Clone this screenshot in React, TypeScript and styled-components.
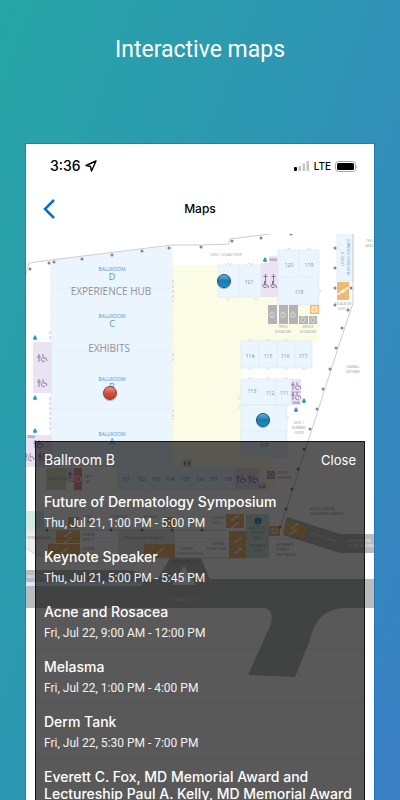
import React, { useState } from "react";
import styled, { createGlobalStyle } from "styled-components";

const GlobalStyle = createGlobalStyle`
  *, *::before, *::after { box-sizing: border-box; }
  body { margin: 0; font-family: Inter, "Liberation Sans", sans-serif; }
  button { font: inherit; }
`;

const Page = styled.main`
  display: flex;
  flex-direction: column;
  height: 100vh;
  overflow: hidden;
  background: linear-gradient(110deg, #27a6a5 0%, #2e95b4 50%, #3a7ec4 100%);
`;

const Headline = styled.h1`
  margin: 0;
  padding: 35px 16px 79px;
  color: #fff;
  font: 400 23px/30px Roboto, sans-serif;
  text-align: center;
`;

const Phone = styled.section`
  display: flex;
  flex: 1;
  flex-direction: column;
  min-height: 0;
  margin: 0 26px;
  background: #fff;
  box-shadow: 0 0 0 1px rgba(0, 112, 176, 0.5);
`;

const StatusBar = styled.div`
  display: flex;
  align-items: center;
  justify-content: space-between;
  height: 44px;
  padding: 0 16px 0 24px;
  color: #000;
`;

const StatusGroup = styled.div`
  display: flex;
  align-items: center;
  gap: 4px;
`;

const Clock = styled.span`
  font-size: 14px;
  font-weight: 500;
  line-height: 20px;
`;

const Network = styled.span`
  font-size: 10px;
  font-weight: 500;
  line-height: 16px;
`;

const NavBar = styled.header`
  display: grid;
  grid-template-columns: 48px 1fr 48px;
  align-items: center;
  height: 42px;
  margin-bottom: 4px;
`;

const BackButton = styled.button`
  display: flex;
  align-items: center;
  height: 42px;
  padding: 0 0 0 16px;
  border: 0;
  background: none;
  cursor: pointer;
`;

const NavTitle = styled.h2`
  margin: 0;
  font-size: 12px;
  font-weight: 500;
  line-height: 16px;
  text-align: center;
`;

const MapArea = styled.div`
  position: relative;
  flex: 1;
  min-height: 0;
  overflow: hidden;
`;

const FloorPlan = styled.svg`
  display: block;
  width: 100%;
  height: auto;
  font-family: "Open Sans", "Noto Sans", sans-serif;
`;

const Pin = styled.button<{ $x: number; $y: number; $tone: "red" | "blue" }>`
  position: absolute;
  left: ${(p) => p.$x}%;
  top: ${(p) => p.$y}px;
  width: 14px;
  height: 14px;
  margin: -7px 0 0 -7px;
  padding: 0;
  border: 1px solid ${(p) => (p.$tone === "red" ? "#7c3a34" : "#1d4c6c")};
  border-radius: 50%;
  background: ${(p) =>
    p.$tone === "red"
      ? "linear-gradient(#ee9384, #d9513f 50%, #b5402f)"
      : "linear-gradient(#62b4dc, #1779b2 50%, #1e8fc8)"};
  box-shadow: 0 1px 1px rgba(0, 0, 0, 0.3);
  cursor: pointer;
`;

const Sheet = styled.section`
  position: absolute;
  top: 207px;
  right: 9px;
  bottom: 0;
  left: 9px;
  display: flex;
  flex-direction: column;
  border: 1px solid #141414;
  border-bottom: 0;
  background: rgba(0, 0, 0, 0.65);
  color: #fff;
`;

const SheetHeader = styled.div`
  display: flex;
  align-items: center;
  justify-content: space-between;
  height: 36px;
  margin-bottom: 6px;
  padding: 0 8px;
`;

const SheetTitle = styled.h3`
  margin: 0;
  font-size: 14px;
  font-weight: 400;
  line-height: 20px;
`;

const CloseButton = styled.button`
  padding: 0;
  border: 0;
  background: none;
  color: #fff;
  font-size: 13px;
  line-height: 20px;
  cursor: pointer;
`;

const SessionList = styled.ul`
  flex: 1;
  min-height: 0;
  margin: 0;
  padding: 0;
  overflow-y: auto;
  list-style: none;
  scrollbar-width: none;
`;

const Session = styled.li`
  padding: 9px 8px 7px;
  border-bottom: 1px solid rgba(0, 0, 0, 0.05);
`;

const SessionTitle = styled.h4`
  margin: 0 0 5px;
  font-size: 14px;
  font-weight: 500;
  line-height: 17px;
`;

const SessionTime = styled.p`
  margin: 0;
  color: #f2f2f2;
  font-family: Roboto, sans-serif;
  font-size: 12px;
  line-height: 16px;
`;

const sessions = [
  { title: "Future of Dermatology Symposium", time: "Thu, Jul 21, 1:00 PM - 5:00 PM" },
  { title: "Keynote Speaker", time: "Thu, Jul 21, 5:00 PM - 5:45 PM" },
  { title: "Acne and Rosacea", time: "Fri, Jul 22, 9:00 AM - 12:00 PM" },
  { title: "Melasma", time: "Fri, Jul 22, 1:00 PM - 4:00 PM" },
  { title: "Derm Tank", time: "Fri, Jul 22, 5:30 PM - 7:00 PM" },
  { title: "Everett C. Fox, MD Memorial Award and Lectureship Paul A. Kelly, MD Memorial Award", time: "" },
];

const C = {
  room: "#ebf5fe",
  foyer: "#fbfce6",
  pink: "#eae3f1",
  orange: "#efba76",
  grey: "#b3b3b7",
  road: "#bbbcbe",
  line: "#cdcdcf",
  dot: "#85858a",
  blue: "#5a95ca",
  small: "#9a9a9e",
};

type Pt = [number, number];

const posts: Pt[] = [
  [30, 269], [49, 263], [54, 262], [82, 259], [112, 255], [142, 251], [169, 248],
  [201, 247], [232, 241], [261, 238], [291, 234], [335, 248], [335, 268],
  [335, 288], [351, 288], [335, 305], [348, 310], [342, 328], [336, 348],
  [330, 369], [323, 389], [317, 409], [310, 429], [304, 449], [298, 469],
  [292, 489], [286, 509], [280, 527], [47, 530], [111, 530], [142, 530], [172, 530], [202, 530],
];

const drops: Pt[] = [[265, 260], [35, 338], [35, 398], [35, 431], [304, 401], [296, 410]];

const roomNumbers: [string, number, number][] = [
  ["121", 249, 284], ["120", 289, 267], ["119", 309, 267], ["118", 299, 294],
  ["114", 250, 358], ["115", 268, 358], ["116", 285, 358], ["117", 303, 358],
  ["113", 252, 393], ["112", 270, 395], ["111", 284, 395], ["109", 264, 447],
  ["101", 126, 481], ["102", 141, 481], ["103", 156, 481], ["104", 170, 481],
  ["105", 185, 481], ["106", 200, 481], ["107", 213, 481], ["108", 228, 481],
];

const ballrooms: [string, number][] = [["D", 271], ["C", 318], ["B", 381], ["A", 436]];

const notes: [string, number, number][] = [
  ["SEAWALL", 353, 368], ["PATHWAY", 353, 373],
  ["LEVEL 1", 299, 424], ["BURRARD", 299, 429], ["FOYER", 299, 434],
  ["TRIPLE", 283, 328], ["ELEVATORS", 283, 333], ["SERVICE", 308, 328], ["ELEVATORS", 308, 333],
  ["ESCALATOR", 343, 305], ["LEVEL 2", 343, 310],
  ["FIRST", 88, 478], ["AID", 88, 483], ["SERVICE", 283, 474], ["ELEVATOR", 284, 479],
  ["MOBILE", 88, 518], ["STAGE", 88, 523], ["EXHIBITION", 119, 518], ["ATTENDEE", 151, 518],
  ["TO/FROM", 88, 536], ["LEVEL 2", 88, 541], ["TO/FROM", 88, 550], ["LEVEL 3", 88, 555],
  ["OPEN TO BELOW OR HALLS", 143, 539], ["TO/FROM", 186, 550], ["CONVENTION LEVEL", 190, 555],
  ["TO/FROM", 218, 519], ["LEVEL 2", 218, 524], ["TO/FROM", 218, 545], ["EXHIBIT LEVEL", 217, 550],
  ["ACCESS TO", 258, 529], ["BURRARD", 258, 534], ["WEST", 258, 539],
  ["ENTRANCE", 258, 547], ["LOBBY", 258, 552],
];

function Restroom({ x, y }: { x: number; y: number }) {
  return (
    <g fill="none" stroke="#8c72a0" strokeWidth="0.9">
      <circle cx={x - 3} cy={y - 3} r="0.8" fill="#785b8f" stroke="none" />
      <path d={`M${x - 5} ${y - 1}h4M${x - 3} ${y - 2}v6`} />
      <path d={`M${x + 1} ${y - 4}v4h3l1 3M${x} ${y}a2 2 0 1 0 3 3`} />
    </g>
  );
}

function Stairs({ x, y }: { x: number; y: number }) {
  return (
    <path d={`M${x - 4} ${y + 2}h2l4 -4h2`} fill="none" stroke="#fff7ea" strokeWidth="1.4" />
  );
}

function VenueMap() {
  return (
    <FloorPlan viewBox="26 234 348 566" role="img" aria-label="Convention level floor plan">
      {/* foyer and exhibit hall */}
      <path d="M171 265H218V297H319V341H241V401H261V405H241V458H275V490H235V467H171Z" fill={C.foyer} />
      <path d="M51 260L171 246V467H51Z" fill={C.room} />
      <path d="M26 274L29 263L51 260L172 245H201L229 244L230 239L270 234" fill="none" stroke={C.line} />
      <g fill="none" stroke="#dde7f0" strokeWidth="0.8" strokeDasharray="2 1">
        <path d="M51 264V467M172 247V467M51 288H171M51 350H171M51 409H171" />
      </g>
      <g fill="none" stroke="#cfdae5" strokeWidth="1.4" strokeDasharray="3 2">
        <path d="M173 280V302M173 353V361M173 409V420M50 331V340M50 397V430" />
      </g>

      {/* meeting rooms */}
      <g fill={C.room} stroke="#dde9f3" strokeWidth="0.7">
        <path d="M218 265H261V297H218ZM278 250H319V305H278ZM241 341H312V368H241Z" />
        <path d="M241 379H291V405H241ZM241 405H287V457H241ZM118 467H235V490H118Z" />
        <path d="M337 232H353V281H337Z" />
      </g>
      <path
        d="M239 265V297M280 277H318M299 250V277M259 341V368M277 341V368M295 341V368M276 380V405M241 431H287M133 467V490M148 467V490M163 467V490M178 467V490M192 467V490M207 467V490M221 467V490"
        fill="none" stroke="#d9e6f0" strokeWidth="0.8" strokeDasharray="2 1"
      />
      <path
        d="M226 265l2-2 2 2 2-2M247 265l2-2 2 2 2-2M226 298l2 2 2-2M254 298l2 2 2-2M287 250l2-2 2 2M307 250l2-2 2 2M248 341l2-2 2 2M266 341l2-2 2 2M284 341l2-2 2 2M248 370l2-2 2 2M266 370l2-2 2 2M284 370l2-2 2 2M302 370l2-2 2 2M248 379l2-2 2 2M266 379l2-2 2 2M284 379l2-2 2 2M287 416l2 2-2 2M319 289l2 2-2 2M240 396l-2 2 2 2M240 405l-2 2 2 2"
        fill="none" stroke="#d0d8e0" strokeWidth="0.8"
      />

      {/* restrooms */}
      <g fill={C.pink}>
        <path d="M261 263H278V297H261ZM269 256H278V263H269ZM33 342H52V393H33Z" />
        <path d="M26 435H52V467H26ZM291 379H301V405H291ZM235 468H259V490H235ZM66 468H74V482H66ZM182 459H192V467H182Z" />
        <path d="M259 482H266V490H259Z" />
      </g>
      <path d="M291 392H301" stroke="#b79bc6" />
      <g fill="none" stroke="#8c72a0">
        <path d="M265.500 274v10M263.500 276.500h4M273.500 274v10M271.500 276.500h4" />
        <path d="M264.500 281v4h3l1 3M263.500 284a2 2 0 1 0 3 3M272.500 281v4h3l1 3M271.500 284a2 2 0 1 0 3 3" />
        <path d="M185 461v5M189 461v5M184 463h2M188 463h2M70 472v6M68 474h4" />
      </g>
      <Restroom x={42} y={358} />
      <Restroom x={42} y={383} />
      <Restroom x={38} y={444} />
      <Restroom x={29} y={457} />
      <Restroom x={43} y={457} />
      <Restroom x={296} y={386} />
      <Restroom x={296} y={396} />
      <Restroom x={241} y={479} />
      <Restroom x={253} y={479} />
      <g fill="#8c72a0" fontSize="4" textAnchor="middle">
        <text x="273" y="261">BBA</text>
        <text x="31" y="438">BBA</text>
        <text x="296" y="404">BBA</text>
        <text x="262" y="488">BBA</text>
      </g>

      {/* elevators and escalators */}
      <path
        d="M268 305H277V324H268ZM279 305H288V324H279ZM289 305H298V324H289ZM299 316H308V324H299ZM309 316H317V324H309ZM267 471H275V479H267Z"
        fill={C.grey}
      />
      <g fill="none" stroke="#dedee0" strokeWidth="0.8">
        {([[272, 315], [283, 315], [293, 315], [303, 320], [313, 320], [271, 475]] as Pt[]).map(([x, y]) => (
          <path key={x} d={`M${x - 2} ${y - 2}h4v4h-4zM${x} ${y - 4}v2M${x} ${y + 2}v1`} />
        ))}
      </g>
      <g fill={C.orange}>
        <path d="M310 305H319V314H310ZM337 282H349V300H337ZM56 530H80V543H56ZM48 544H80V558H48ZM144 544H175V558H144Z" />
        <path d="M68 517H79V528H68ZM164 517H175V528H164Z" />
      </g>
      <path d="M312 307l5 5M317 307l-5 5M312 307h5v5h-5z" stroke="#fff7ea" fill="none" />
      <Stairs x={341} y={292} />
      <Stairs x={345} y={290} />

      {/* lobby level */}
      <path d="M26 511H44V529H26Z" fill="#d5ece4" />
      <path d="M46 468H66V490H46Z" fill="#e2dfc6" />
      <path d="M74 468H82V490H74Z" fill="#e79a98" />
      <circle cx="78" cy="479" r="3" fill="none" stroke="#fff" />
      <path d="M26 530H56V544H48V558C38 556 31 553 26 548Z" fill="#ededee" />
      <path d="M118 530H175V544H144V558H118Z" fill="#e9e9ea" />
      <path d="M26 548C38 558 48 558 62 558H246M26 530H226" fill="none" stroke="#d6d6d8" />
      <path d="M246 514H269V558H246Z" fill="#cfe6da" />
      <path d="M226 514H244V528H226ZM229 531H246V558H229ZM269 526H280V536H269Z" fill={C.orange} />
      <path d="M272 529h5v4h-5z" stroke="#fff7ea" fill="none" />
      <Stairs x={68} y={534} />
      <Stairs x={68} y={540} />
      <Stairs x={64} y={551} />
      <Stairs x={160} y={551} />
      <Stairs x={235} y={518} />
      <Stairs x={235} y={525} />
      <Stairs x={238} y={540} />
      <Stairs x={238} y={551} />
      <circle cx="258" cy="521" r="3.500" fill="#2d8fd0" />
      <path d="M258 518.500v1M258 520.500v3" stroke="#fff" />

      {/* streets */}
      <g fill={C.road}>
        <path d="M287 517L340 534H380V553H340L283 535Z" />
        <path d="M26 570H128Q140 571 150 579H380V608H346C322 608 314 624 310 640L295 677L248 675L271 624Q274 609 264 608H26Z" />
        <path d="M170 558H201L210 580H157Z" />
      </g>
      <path d="M22 582H142V586H22Z" fill="#d9ebfa" />
      <path d="M184 566L196 585H172Z" fill="#fff" />
      <path d="M286 520L308 527L304 539L283 533Z" fill={C.orange} />
      <Stairs x={295} y={526} />
      <Stairs x={293} y={532} />
      <path d="M353 234V303L339 345L281 526" fill="none" stroke={C.line} />

      {/* posts and water fountains */}
      {posts.map(([x, y]) => (
        <circle key={`${x}-${y}`} cx={x} cy={y} r="1.500" fill={C.dot} />
      ))}
      {drops.map(([x, y]) => (
        <path key={`${x}-${y}`} d={`M${x} ${y - 3}q4 5 0 5q-4 0 0 -5z`} fill="#2f97d4" />
      ))}

      {/* labels */}
      <g fill={C.blue} textAnchor="middle">
        {ballrooms.map(([name, y]) => (
          <React.Fragment key={name}>
            <text x="112" y={y} fontSize="5">BALLROOM</text>
            <text x="112" y={y + 9} fontSize="9">{name}</text>
          </React.Fragment>
        ))}
        {roomNumbers.map(([n, x, y]) => (
          <text key={n} x={x} y={y} fontSize="5">{n}</text>
        ))}
        <g transform="rotate(-90 345 257)" fontSize="4">
          <text x="343" y="256">LEVEL 1</text>
          <text x="345" y="262">SUPERIOR TERRACE</text>
        </g>
      </g>
      <g fill="#8f9296" textAnchor="middle" fontSize="10">
        <text x="111" y="295">EXPERIENCE HUB</text>
        <text x="109" y="352">EXHIBITS</text>
      </g>
      <g fill={C.small} textAnchor="middle" fontSize="3">
        {notes.map(([t, x, y]) => (
          <text key={`${x}-${y}`} x={x} y={y}>{t}</text>
        ))}
        <text x="226" y="256">LEVEL 1 OCEAN FOYER</text>
      </g>
      <g fill={C.small} fontSize="3">
        <text x="366" y="242">THE L</text>
        <text x="365" y="247">LAKES</text>
        <text x="310" y="510">ACCESS TO RETAIL</text>
        <text x="310" y="515">ON BURRARD LANDING</text>
        <text x="48" y="480">WORK OFFICE</text>
        <text x="27" y="539">OPEN TO BELOW</text>
        <text x="171" y="563">PARKADE ENTRANCE</text>
      </g>
      <g fill={C.small} fontSize="4">
        <text x="276" y="546">BURRARD</text>
        <text x="276" y="551">STREET</text>
        <text x="276" y="556">ENTRANCE</text>
      </g>
      <g fill="#f6f6f6" fontSize="4">
        <text x="27" y="578">MULTI-WAY PATH</text>
        <text x="173" y="601" fill="#e4e4e6">CANADA PL</text>
        <text x="348" y="542" fontSize="3">UNDERGROUND</text>
        <text x="348" y="547" fontSize="3">TO EAST BUILDING</text>
        <text x="309" y="534" fontSize="3" transform="rotate(17 309 534)">TO/FROM SKYTRAIN</text>
      </g>
    </FloorPlan>
  );
}

export default function App() {
  const [open, setOpen] = useState(true);
  return (
    <>
      <GlobalStyle />
      <Page>
        <Headline>Interactive maps</Headline>
        <Phone>
          <StatusBar>
            <StatusGroup>
              <Clock>3:36</Clock>
              <svg width="12" height="12" viewBox="0 0 12 12" aria-hidden="true">
                <path d="M11 1L1 5.500L5.500 6.500L6.500 11Z" fill="none" stroke="#000" strokeWidth="1.400" strokeLinejoin="round" />
              </svg>
            </StatusGroup>
            <StatusGroup>
              <svg width="16" height="10" viewBox="0 0 16 10" aria-hidden="true">
                <rect x="0" y="6" width="3" height="4" rx="1" />
                <path d="M4.500 5h2.500v5H4.500zM8.500 2.500H11V10H8.500zM12.500 0H15v10h-2.500z" fill="#c4c4c4" />
              </svg>
              <Network>LTE</Network>
              <svg width="23" height="11" viewBox="0 0 23 11" aria-hidden="true">
                <rect x="0.500" y="0.500" width="20" height="10" rx="3" fill="none" stroke="#a3a3a3" />
                <rect x="2" y="2" width="17" height="7" rx="1.500" />
                <path d="M21.500 3.500q1.500 2 0 4z" fill="#a3a3a3" />
              </svg>
            </StatusGroup>
          </StatusBar>
          <NavBar>
            <BackButton aria-label="Back">
              <svg width="14" height="20" viewBox="0 0 14 20" aria-hidden="true">
                <path d="M12 1L3 10L12 19" fill="none" stroke="#0a6fc2" strokeWidth="2.500" />
              </svg>
            </BackButton>
            <NavTitle>Maps</NavTitle>
          </NavBar>
          <MapArea>
            <VenueMap />
            <Pin $x={57} $y={47} $tone="blue" aria-label="Room 122" />
            <Pin $x={68} $y={186} $tone="blue" aria-label="Room 110" />
            <Pin $x={24} $y={159} $tone="red" aria-label="Ballroom B" onClick={() => setOpen(true)} />
            {open && (
              <Sheet aria-label="Ballroom B">
                <SheetHeader>
                  <SheetTitle>Ballroom B</SheetTitle>
                  <CloseButton onClick={() => setOpen(false)}>Close</CloseButton>
                </SheetHeader>
                <SessionList>
                  {sessions.map((s) => (
                    <Session key={s.title}>
                      <SessionTitle>{s.title}</SessionTitle>
                      {s.time && <SessionTime>{s.time}</SessionTime>}
                    </Session>
                  ))}
                </SessionList>
              </Sheet>
            )}
          </MapArea>
        </Phone>
      </Page>
    </>
  );
}
